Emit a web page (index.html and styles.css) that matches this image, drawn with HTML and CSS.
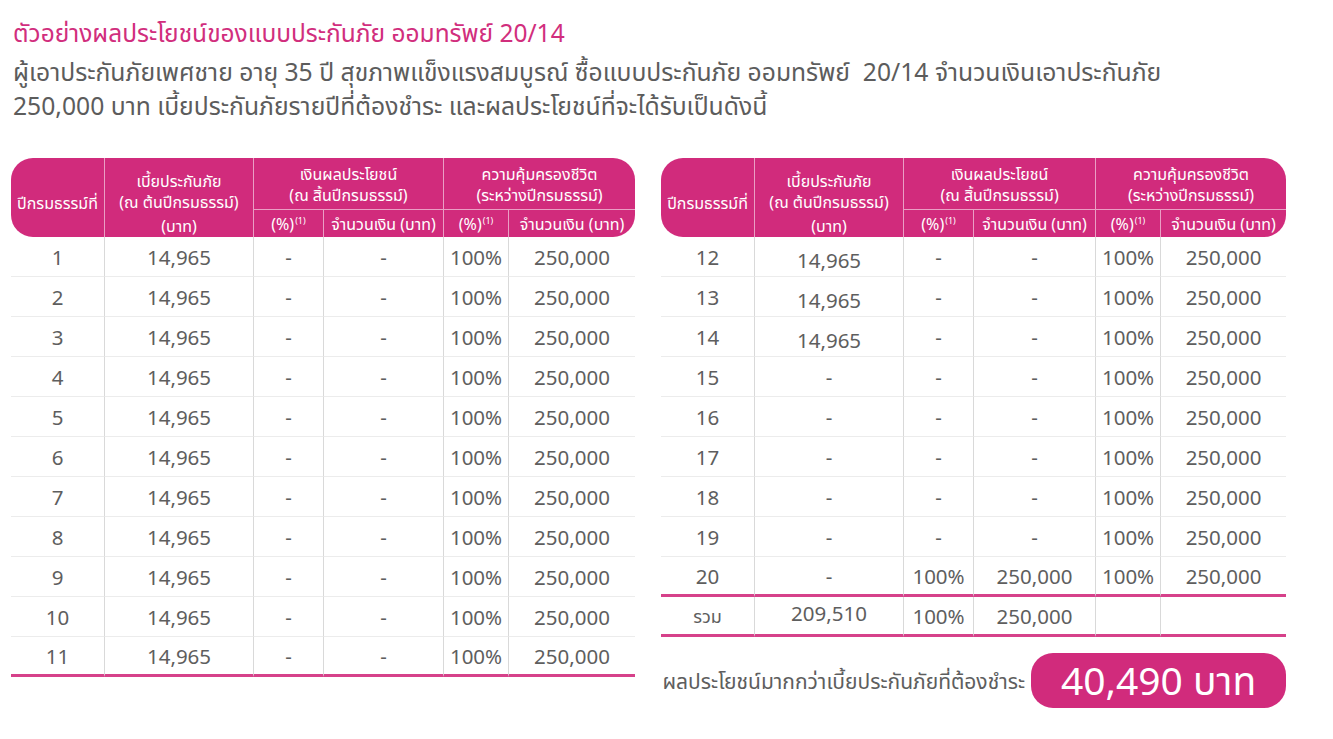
FILE: index.html
```html
<!DOCTYPE html>
<html lang="th">
<head>
<meta charset="utf-8">
<title>ตัวอย่างผลประโยชน์</title>
<link rel="stylesheet" href="styles.css">
</head>
<body>
<div class="page">
  <h1 class="title">ตัวอย่างผลประโยชน์ของแบบประกันภัย ออมทรัพย์ 20/14</h1>
  <p class="intro">ผู้เอาประกันภัยเพศชาย อายุ 35 ปี สุขภาพแข็งแรงสมบูรณ์ ซื้อแบบประกันภัย ออมทรัพย์&nbsp; 20/14 จำนวนเงินเอาประกันภัย<br>250,000 บาท เบี้ยประกันภัยรายปีที่ต้องชำระ และผลประโยชน์ที่จะได้รับเป็นดังนี้</p>

  <div class="tables">
    <div class="col">
      <table class="tbl left">
        <colgroup><col style="width:93px"><col style="width:149px"><col style="width:70px"><col style="width:120px"><col style="width:65px"><col style="width:127px"></colgroup>
        <thead>
          <tr class="h1">
            <th rowspan="2" class="c-tl c-bl year">ปีกรมธรรม์ที่</th>
            <th rowspan="2" class="sep prem"><span>เบี้ยประกันภัย</span><span>(ณ ต้นปีกรมธรรม์)</span><span class="unit">(บาท)</span></th>
            <th colspan="2" class="sep grp"><span>เงินผลประโยชน์</span><span>(ณ สิ้นปีกรมธรรม์)</span></th>
            <th colspan="2" class="sep grp c-tr"><span>ความคุ้มครองชีวิต</span><span>(ระหว่างปีกรมธรรม์)</span></th>
          </tr>
          <tr class="h2">
            <th class="sep top">(%)<sup>(1)</sup></th>
            <th class="sep top">จำนวนเงิน (บาท)</th>
            <th class="sep top">(%)<sup>(1)</sup></th>
            <th class="sep top c-br">จำนวนเงิน (บาท)</th>
          </tr>
        </thead>
        <tbody>
          <tr><td>1</td><td>14,965</td><td>-</td><td>-</td><td>100%</td><td>250,000</td></tr>
          <tr><td>2</td><td>14,965</td><td>-</td><td>-</td><td>100%</td><td>250,000</td></tr>
          <tr><td>3</td><td>14,965</td><td>-</td><td>-</td><td>100%</td><td>250,000</td></tr>
          <tr><td>4</td><td>14,965</td><td>-</td><td>-</td><td>100%</td><td>250,000</td></tr>
          <tr><td>5</td><td>14,965</td><td>-</td><td>-</td><td>100%</td><td>250,000</td></tr>
          <tr><td>6</td><td>14,965</td><td>-</td><td>-</td><td>100%</td><td>250,000</td></tr>
          <tr><td>7</td><td>14,965</td><td>-</td><td>-</td><td>100%</td><td>250,000</td></tr>
          <tr><td>8</td><td>14,965</td><td>-</td><td>-</td><td>100%</td><td>250,000</td></tr>
          <tr><td>9</td><td>14,965</td><td>-</td><td>-</td><td>100%</td><td>250,000</td></tr>
          <tr><td>10</td><td>14,965</td><td>-</td><td>-</td><td>100%</td><td>250,000</td></tr>
          <tr class="pink-bottom"><td>11</td><td>14,965</td><td>-</td><td>-</td><td>100%</td><td>250,000</td></tr>
        </tbody>
      </table>
    </div>

    <div class="col">
      <table class="tbl right">
        <colgroup><col style="width:93px"><col style="width:149px"><col style="width:70px"><col style="width:122px"><col style="width:65px"><col style="width:126px"></colgroup>
        <thead>
          <tr class="h1">
            <th rowspan="2" class="c-tl c-bl year">ปีกรมธรรม์ที่</th>
            <th rowspan="2" class="sep prem"><span>เบี้ยประกันภัย</span><span>(ณ ต้นปีกรมธรรม์)</span><span class="unit">(บาท)</span></th>
            <th colspan="2" class="sep grp"><span>เงินผลประโยชน์</span><span>(ณ สิ้นปีกรมธรรม์)</span></th>
            <th colspan="2" class="sep grp c-tr"><span>ความคุ้มครองชีวิต</span><span>(ระหว่างปีกรมธรรม์)</span></th>
          </tr>
          <tr class="h2">
            <th class="sep top">(%)<sup>(1)</sup></th>
            <th class="sep top">จำนวนเงิน (บาท)</th>
            <th class="sep top">(%)<sup>(1)</sup></th>
            <th class="sep top c-br">จำนวนเงิน (บาท)</th>
          </tr>
        </thead>
        <tbody>
          <tr><td>12</td><td class="low">14,965</td><td>-</td><td>-</td><td>100%</td><td>250,000</td></tr>
          <tr><td>13</td><td class="low">14,965</td><td>-</td><td>-</td><td>100%</td><td>250,000</td></tr>
          <tr><td>14</td><td class="low">14,965</td><td>-</td><td>-</td><td>100%</td><td>250,000</td></tr>
          <tr><td>15</td><td>-</td><td>-</td><td>-</td><td>100%</td><td>250,000</td></tr>
          <tr><td>16</td><td>-</td><td>-</td><td>-</td><td>100%</td><td>250,000</td></tr>
          <tr><td>17</td><td>-</td><td>-</td><td>-</td><td>100%</td><td>250,000</td></tr>
          <tr><td>18</td><td>-</td><td>-</td><td>-</td><td>100%</td><td>250,000</td></tr>
          <tr><td>19</td><td>-</td><td>-</td><td>-</td><td>100%</td><td>250,000</td></tr>
          <tr class="pink-bottom"><td>20</td><td>-</td><td>100%</td><td>250,000</td><td>100%</td><td>250,000</td></tr>
          <tr class="pink-bottom total"><td class="sum">รวม</td><td class="up">209,510</td><td>100%</td><td>250,000</td><td></td><td></td></tr>
        </tbody>
      </table>
      <div class="benefit">
        <span class="benefit-label">ผลประโยชน์มากกว่าเบี้ยประกันภัยที่ต้องชำระ</span>
        <span class="benefit-box">40,490 บาท</span>
      </div>
    </div>
  </div>
</div>
</body>
</html>
```

FILE: styles.css
```css
html, body {
  margin: 0;
  padding: 0;
  background: #ffffff;
}

body {
  font-family: "Noto Sans", "Noto Sans Thai", "Open Sans", sans-serif;
  color: #5f5f5f;
}

.page {
  padding: 16px 0 0 13px;
}

.title {
  margin: 0;
  font-size: 24.5px;
  font-weight: 400;
  line-height: 34px;
  color: #d12e7d;
}

.intro {
  margin: 5px 0 0 0;
  font-size: 24.7px;
  line-height: 34px;
  color: #5c5c5c;
}

.tables {
  display: flex;
  gap: 26px;
  margin: 35px 0 0 -2px;
  align-items: flex-start;
}

.col {
  display: flex;
  flex-direction: column;
}

.tbl {
  border-collapse: separate;
  border-spacing: 0;
  table-layout: fixed;
}

.tbl.left { width: 624px; }
.tbl.right { width: 625px; }

.tbl th {
  background: #d12b7c;
  color: #ffffff;
  font-weight: 400;
  font-size: 16px;
  line-height: 20px;
  padding: 0;
  text-align: center;
  vertical-align: middle;
  white-space: nowrap;
}

.tbl th span {
  display: block;
}

.tbl .h1 th {
  height: 51px;
}

.tbl .h1 th.grp {
  height: 49px;
  padding-top: 2px;
}

.tbl .h1 th.grp span + span {
  margin-top: 1px;
}

.tbl .h1 th.year {
  padding-top: 10px;
}

.tbl .h2 th {
  height: 27px;
  font-size: 16px;
}

.tbl th.sep {
  border-left: 1px solid rgba(255, 255, 255, 0.55);
}

.tbl th.top {
  border-top: 1px solid rgba(255, 255, 255, 0.55);
}

.tbl th.prem {
  vertical-align: top;
  padding-top: 13px;
}

.tbl th.prem span + span {
  margin-top: 1px;
}

.tbl th.prem .unit {
  margin-top: 4px;
}

.tbl th sup {
  font-size: 9px;
  line-height: 0;
  vertical-align: 6px;
  margin-left: 1px;
}

.c-tl { border-top-left-radius: 22px; }
.c-bl { border-bottom-left-radius: 22px; }
.c-tr { border-top-right-radius: 22px; }
.c-br { border-bottom-right-radius: 22px; }

.tbl td {
  height: 39px;
  padding: 0;
  text-align: center;
  font-size: 20.5px;
  color: #5e5e5e;
  border-bottom: 1px solid #ececec;
  border-left: 1px solid #d9d9d9;
  vertical-align: middle;
}

.tbl td:first-child {
  border-left: none;
}

.tbl td.low {
  height: 33px;
  padding-top: 6px;
}

.tbl tr.pink-bottom td {
  border-bottom: 3px solid #d6418a;
  height: 37px;
}

.tbl tr.total td.sum {
  font-size: 18px;
  padding-top: 4px;
  height: 33px;
}

.tbl tr.total td.up {
  padding-bottom: 6px;
  height: 31px;
}

.benefit {
  display: flex;
  align-items: center;
  justify-content: flex-end;
  gap: 6px;
  margin-top: 16px;
}

.benefit-label {
  font-size: 21px;
  color: #5e5e5e;
  padding-top: 3px;
  white-space: nowrap;
}

.benefit-box {
  display: flex;
  align-items: center;
  justify-content: center;
  flex: none;
  width: 255px;
  height: 55px;
  border-radius: 22px;
  background: #d12b7c;
  color: #ffffff;
  font-size: 39px;
  line-height: 1;
  padding-bottom: 2px;
  box-sizing: border-box;
}
```
